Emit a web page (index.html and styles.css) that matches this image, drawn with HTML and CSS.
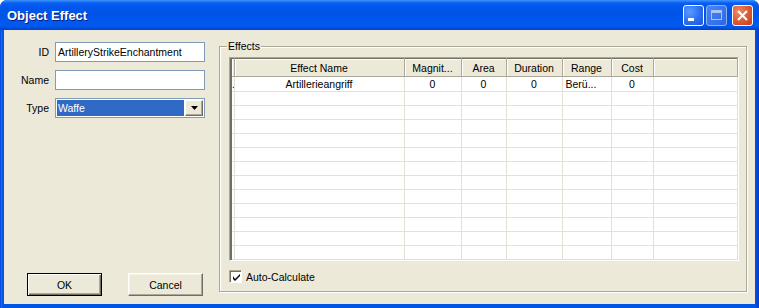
FILE: index.html
```html
<!DOCTYPE html>
<html lang="en">
<head>
    <meta charset="UTF-8">
    <title>Object Effect</title>
    <link rel="stylesheet" href="styles.css">
</head>
<body>
    <div class="window">
        <!-- title bar -->
        <div class="titlebar">
            <span class="title">Object Effect</span>
            <div class="caption-buttons">
                <span class="cap-btn">
                    <svg width="19" height="19" viewBox="0 0 19 19"><rect x="4" y="12" width="6" height="3" fill="#fff"/></svg>
                </span>
                <span class="cap-btn disabled">
                    <svg width="19" height="19" viewBox="0 0 19 19"><rect x="4.5" y="4.5" width="10" height="9" fill="none" stroke="#a9c3f5" stroke-width="1"/><rect x="4" y="4" width="11" height="3" fill="#a9c3f5"/></svg>
                </span>
                <span class="cap-btn close">
                    <svg width="19" height="19" viewBox="0 0 19 19"><path d="M5 5 L14 14 M14 5 L5 14" stroke="#fff" stroke-width="2"/></svg>
                </span>
            </div>
        </div>

        <div class="client">
            <!-- left: fields + buttons -->
            <div class="left-pane">
                <div class="form">
                    <span class="label">ID</span>
                    <div class="textbox">ArtilleryStrikeEnchantment</div>
                    <span class="label">Name</span>
                    <div class="textbox"></div>
                    <span class="label">Type</span>
                    <div class="combo">
                        <span class="combo-value">Waffe</span>
                        <span class="combo-arrow">
                            <svg width="7" height="4" viewBox="0 0 7 4"><path d="M0 0 H7 L3.5 4 Z" fill="#000"/></svg>
                        </span>
                    </div>
                </div>
                <div class="buttons">
                    <button class="btn default">OK</button>
                    <button class="btn">Cancel</button>
                </div>
            </div>

            <!-- right: effects group -->
            <div class="group">
                <span class="legend">Effects</span>
                <div class="grid">
                    <table>
                        <colgroup>
                            <col class="c-rowhead">
                            <col class="c-name">
                            <col class="c-magn">
                            <col class="c-area">
                            <col class="c-dur">
                            <col class="c-range">
                            <col class="c-cost">
                            <col>
                        </colgroup>
                        <thead>
                            <tr>
                                <th></th>
                                <th>Effect Name</th>
                                <th>Magnit...</th>
                                <th>Area</th>
                                <th>Duration</th>
                                <th>Range</th>
                                <th>Cost</th>
                                <th></th>
                            </tr>
                        </thead>
                        <tbody>
                            <tr class="first">
                                <td class="rowhead">.</td>
                                <td class="center">Artillerieangriff</td>
                                <td class="center">0</td>
                                <td class="center">0</td>
                                <td class="center">0</td>
                                <td>Berü...</td>
                                <td class="center">0</td>
                                <td></td>
                            </tr>
                            <tr><td></td><td></td><td></td><td></td><td></td><td></td><td></td><td></td></tr>
                            <tr><td></td><td></td><td></td><td></td><td></td><td></td><td></td><td></td></tr>
                            <tr><td></td><td></td><td></td><td></td><td></td><td></td><td></td><td></td></tr>
                            <tr><td></td><td></td><td></td><td></td><td></td><td></td><td></td><td></td></tr>
                            <tr><td></td><td></td><td></td><td></td><td></td><td></td><td></td><td></td></tr>
                            <tr><td></td><td></td><td></td><td></td><td></td><td></td><td></td><td></td></tr>
                            <tr><td></td><td></td><td></td><td></td><td></td><td></td><td></td><td></td></tr>
                            <tr><td></td><td></td><td></td><td></td><td></td><td></td><td></td><td></td></tr>
                            <tr><td></td><td></td><td></td><td></td><td></td><td></td><td></td><td></td></tr>
                            <tr><td></td><td></td><td></td><td></td><td></td><td></td><td></td><td></td></tr>
                            <tr><td></td><td></td><td></td><td></td><td></td><td></td><td></td><td></td></tr>
                            <tr><td></td><td></td><td></td><td></td><td></td><td></td><td></td><td></td></tr>
                        </tbody>
                    </table>
                </div>
                <div class="check">
                    <span class="check-box">
                        <svg width="7" height="7" viewBox="0 0 7 7"><path d="M0 2 L0 5 L2 7 L7 2 L7 0 L2 5 Z" fill="#000"/></svg>
                    </span>
                    <span>Auto-Calculate</span>
                </div>
            </div>
        </div>
    </div>
</body>
</html>
```

FILE: styles.css
```css
body {
    margin: 0;
    background: #fff;
    font-family: "Liberation Sans", Arial, sans-serif;
    font-size: 10.5px;
    color: #000;
}
.window {
    width: 759px;
    height: 308px;
    display: flex;
    flex-direction: column;
    background: linear-gradient(to right, #0831d9 0, #166aee 1px, #0055e5 3px, #0055e5 755px, #0a3fd0 758px);
    border-radius: 7px 7px 0 0;
    overflow: hidden;
}
.titlebar {
    height: 30px;
    flex: none;
    display: flex;
    align-items: center;
    padding: 0 6px 0 7px;
    box-sizing: border-box;
    background: linear-gradient(to bottom, #3d95ff 0, #0a5ff0 3px, #0058ee 6px, #0054e6 14px, #0058ee 22px, #0059f0 26px, #0047d6 29px, #0041cf 30px);
}
.title {
    flex: 1;
    color: #fff;
    font-weight: bold;
    font-size: 13px;
    text-shadow: 1px 1px #0c1d7a;
    padding-top: 1px;
}
.caption-buttons {
    display: flex;
    gap: 2px;
}
.cap-btn {
    width: 21px;
    height: 21px;
    box-sizing: border-box;
    border: 1px solid #fff;
    border-radius: 3px;
    display: flex;
    align-items: center;
    justify-content: center;
    background: radial-gradient(circle at 30% 30%, #5a9bff 0, #2c6ff0 55%, #1d55d8 100%);
}
.cap-btn.disabled {
    border-color: #8fb0ee;
    background: linear-gradient(135deg, #4a86f2, #2d67e6);
}
.cap-btn.close {
    margin-left: 3px;
    background: radial-gradient(circle at 30% 30%, #ef8a67 0, #e05a32 50%, #c3401c 100%);
}

.client {
    flex: 1;
    margin: 0 4px 4px;
    background: #ece9d8;
    display: flex;
}
.left-pane {
    width: 215px;
    flex: none;
    display: flex;
    flex-direction: column;
    padding: 12px 0 8px;
    box-sizing: border-box;
}
.form {
    display: grid;
    grid-template-columns: 45px 150px;
    grid-auto-rows: 20px;
    column-gap: 6px;
    row-gap: 8px;
}
.label {
    text-align: right;
    line-height: 20px;
}
.textbox {
    border: 1px solid #7f9db9;
    background: #fff;
    line-height: 18px;
    padding-left: 2px;
    white-space: nowrap;
    overflow: hidden;
}
.combo {
    display: flex;
    border: 1px solid #7f9db9;
    background: #fff;
    padding: 1px;
    gap: 1px;
}
.combo-value {
    flex: 1;
    background: #316ac5;
    color: #fff;
    line-height: 16px;
    padding-left: 1px;
}
.combo-arrow {
    width: 18px;
    display: flex;
    align-items: center;
    justify-content: center;
    box-sizing: border-box;
    background: #ece9d8;
    border: 1px solid;
    border-color: #fff #716f64 #716f64 #fff;
    box-shadow: inset -1px -1px #aca899;
}
.buttons {
    margin-top: auto;
    display: flex;
    gap: 26px;
    padding-left: 23px;
}
.btn {
    width: 75px;
    height: 23px;
    padding: 0;
    font-family: inherit;
    font-size: 10.5px;
    background: #ece9d8;
    border: 1px solid;
    border-color: #fff #716f64 #716f64 #fff;
    box-shadow: inset -1px -1px #aca899, inset 1px 1px #f5f4ea;
}
.btn.default {
    border: 1px solid #000;
    box-shadow: inset 1px 1px #fff, inset -1px -1px #716f64, inset -2px -2px #aca899;
}

.group {
    flex: 1;
    position: relative;
    margin: 16px 8px 12px 0;
    border: 1px solid #aca899;
    box-shadow: 1px 1px 0 #fff, inset 1px 1px 0 #fff;
    padding: 10px 7px 0 9px;
    display: flex;
    flex-direction: column;
}
.legend {
    position: absolute;
    top: -7px;
    left: 7px;
    padding: 0 1px;
    background: #ece9d8;
}
.grid {
    height: 204px;
    box-sizing: border-box;
    border: 1px solid;
    border-color: #aca899 #fff #fff #aca899;
    background: #fff;
    overflow: hidden;
}
.grid table {
    width: 100%;
    table-layout: fixed;
    border-collapse: collapse;
    border-top: 1px solid #716f64;
    border-left: 2px solid #716f64;
    box-sizing: border-box;
}
.c-rowhead { width: 3px; }
.c-name { width: 170px; }
.c-magn { width: 57px; }
.c-area { width: 45px; }
.c-dur { width: 56px; }
.c-range { width: 49px; }
.c-cost { width: 42px; }
.grid th {
    height: 17px;
    padding: 0;
    font-weight: normal;
    background: #ece9d8;
    border-right: 1px solid #aca899;
    border-bottom: 1px solid #aca899;
    box-shadow: inset 1px 1px #fff;
    white-space: nowrap;
    overflow: hidden;
}
.grid td {
    height: 13px;
    padding: 0 0 0 3px;
    border-right: 1px solid #e3e1d6;
    border-bottom: 1px solid #e3e1d6;
    white-space: nowrap;
    overflow: hidden;
    line-height: 13px;
}
.grid tr.first td {
    height: 14px;
}
.grid td.center {
    text-align: center;
    padding: 0;
}
.grid td.rowhead {
    padding: 0;
}
.check {
    margin-top: 9px;
    display: flex;
    align-items: center;
    gap: 4px;
}
.check-box {
    width: 13px;
    height: 13px;
    box-sizing: border-box;
    background: #fff;
    border: 1px solid;
    border-color: #aca899 #fff #fff #aca899;
    box-shadow: inset 1px 1px #716f64;
    display: flex;
    align-items: center;
    justify-content: center;
    padding: 1px 0 0 1px;
}
```
